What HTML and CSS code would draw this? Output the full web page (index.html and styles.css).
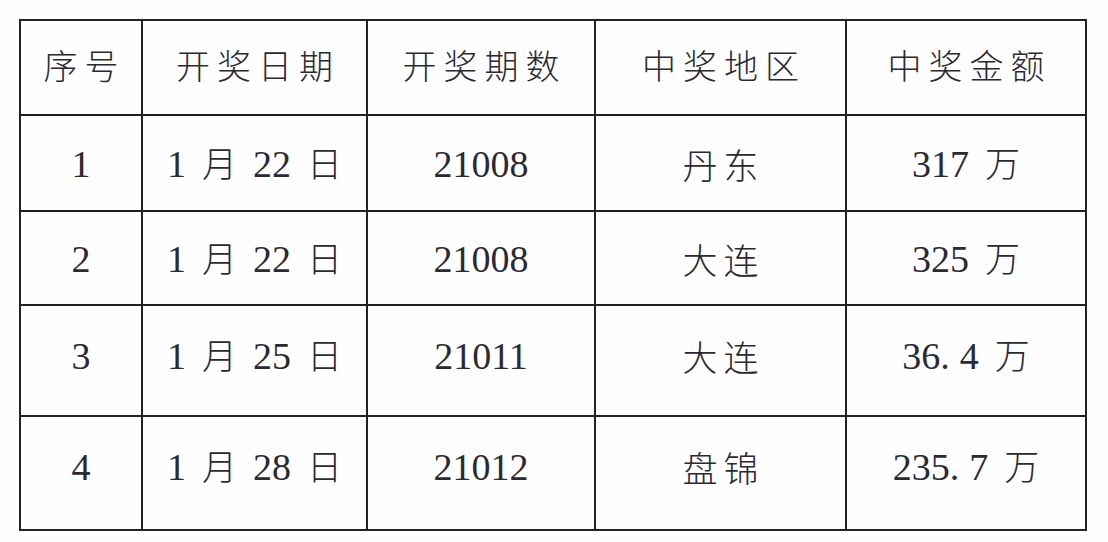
FILE: index.html
```html
<!DOCTYPE html>
<html lang="zh">
<head>
<meta charset="utf-8">
<link rel="stylesheet" href="styles.css">
</head>
<body>
<table class="grid">
  <colgroup>
    <col class="c1"><col class="c2"><col class="c3"><col class="c4"><col class="c5">
  </colgroup>
  <tr class="r0">
    <th>序号</th><th>开奖日期</th><th>开奖期数</th><th>中奖地区</th><th>中奖金额</th>
  </tr>
  <tr class="r1">
    <td><span class="n">1</span></td>
    <td><span class="n">1</span><span class="gap"></span>月<span class="gap"></span><span class="n">22</span><span class="gap"></span>日</td>
    <td><span class="n">21008</span></td>
    <td class="place">丹东</td>
    <td><span class="n">317</span><span class="gap"></span>万</td>
  </tr>
  <tr class="r2">
    <td><span class="n">2</span></td>
    <td><span class="n">1</span><span class="gap"></span>月<span class="gap"></span><span class="n">22</span><span class="gap"></span>日</td>
    <td><span class="n">21008</span></td>
    <td class="place">大连</td>
    <td><span class="n">325</span><span class="gap"></span>万</td>
  </tr>
  <tr class="r3">
    <td><span class="n">3</span></td>
    <td><span class="n">1</span><span class="gap"></span>月<span class="gap"></span><span class="n">25</span><span class="gap"></span>日</td>
    <td><span class="n">21011</span></td>
    <td class="place">大连</td>
    <td><span class="n">36.<span class="gap-s"></span>4</span><span class="gap"></span>万</td>
  </tr>
  <tr class="r4">
    <td><span class="n">4</span></td>
    <td><span class="n">1</span><span class="gap"></span>月<span class="gap"></span><span class="n">28</span><span class="gap"></span>日</td>
    <td><span class="n">21012</span></td>
    <td class="place">盘锦</td>
    <td><span class="n">235.<span class="gap-s"></span>7</span><span class="gap"></span>万</td>
  </tr>
</table>
</body>
</html>
```
FILE: styles.css
```css
html, body {
  margin: 0;
  padding: 0;
  background: #fefefe;
}
body {
  width: 1108px;
  height: 542px;
  overflow: hidden;
}
.grid {
  margin: 19px 0 0 19px;
  border-collapse: collapse;
  table-layout: fixed;
  width: 1068px;
  color: #2a2a33;
  font-family: "Noto Sans CJK SC", sans-serif;
  font-weight: 300;
  font-size: 35px;
}
.c1 { width: 122px; }
.c2 { width: 225px; }
.c3 { width: 228px; }
.c4 { width: 251px; }
.c5 { width: 240px; }
.grid th, .grid td {
  border: 2px solid #222;
  padding: 0;
  text-align: center;
  vertical-align: middle;
  font-weight: 300;
  line-height: 1;
  white-space: nowrap;
}
.grid th {
  font-size: 34px;
  letter-spacing: 7px;
  text-indent: 7px;
  padding-bottom: 5px;
}
.grid td.place {
  letter-spacing: 6px;
  text-indent: 6px;
}
.r0 { height: 95px; }
.r1 { height: 96px; }
.r2 { height: 94px; }
.r3 { height: 111px; }
.r4 { height: 114px; }
.grid .r3 td { padding-bottom: 10px; }
.grid .r4 td { padding-bottom: 14px; }
.n {
  font-family: "Liberation Serif", serif;
  font-weight: 400;
  font-size: 38px;
  letter-spacing: 0;
}
.gap {
  display: inline-block;
  width: 16px;
}
.gap-s {
  display: inline-block;
  width: 10px;
}
```
